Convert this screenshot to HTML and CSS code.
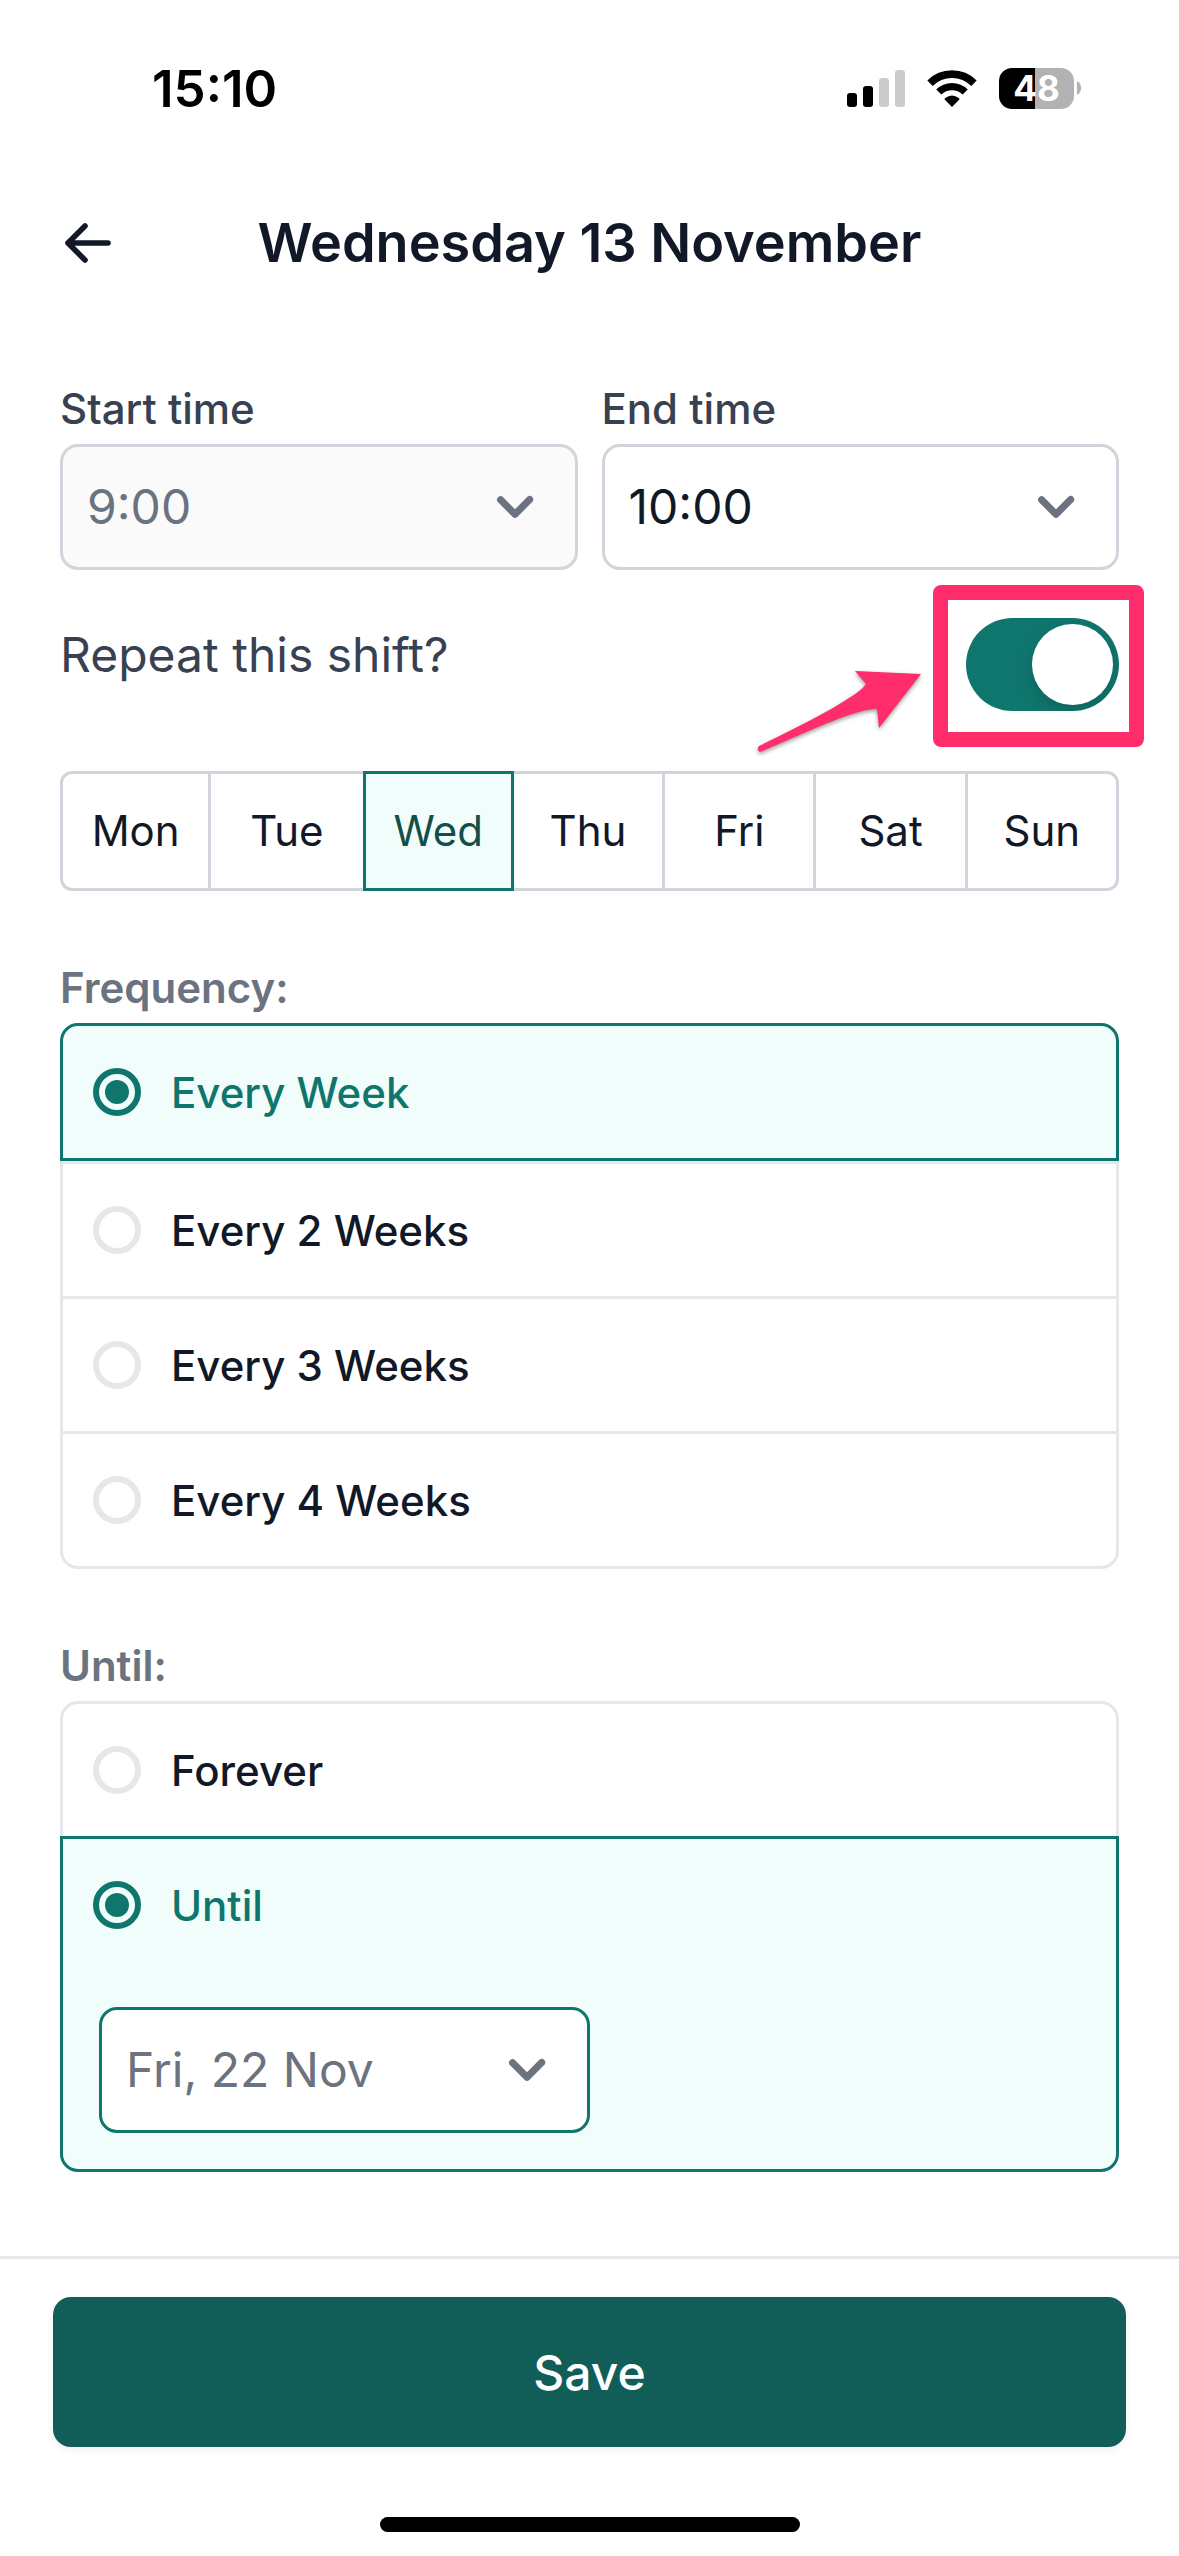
FILE: index.html
```html
<!DOCTYPE html>
<html lang="en">
<head>
  <meta charset="UTF-8">
  <meta name="viewport" content="width=device-width, initial-scale=1.0">
  <title>Wednesday 13 November</title>
  <link rel="stylesheet" href="styles.css">
</head>
<body>
  <!-- Status bar -->
  <div class="status-bar">
    <span class="clock">15:10</span>
    <div class="status-icons">
      <svg width="58" height="37" viewBox="0 0 58 37">
        <rect x="0" y="23" width="10" height="14" rx="3" fill="#000"/>
        <rect x="16" y="16" width="10" height="21" rx="3" fill="#000"/>
        <rect x="32" y="8" width="10" height="29" rx="3" fill="#cbcbcb"/>
        <rect x="48" y="0" width="10" height="37" rx="3" fill="#cbcbcb"/>
      </svg>
      <svg width="50" height="37" viewBox="0 0 50 37">
        <path d="M3 13.2A31.2 31.2 0 0 1 47 13.2" fill="none" stroke="#000" stroke-width="7.6"/>
        <path d="M11.8 22A18.7 18.7 0 0 1 38.2 22" fill="none" stroke="#000" stroke-width="7.2"/>
        <path d="M25 37L17.6 29.4Q17.4 28.6 18.2 28Q25 22.8 31.8 28Q32.6 28.6 32.4 29.4Z" fill="#000"/>
      </svg>
      <div class="battery">
        <span class="battery-level">48</span>
        <svg width="4" height="14" viewBox="0 0 4 14"><path d="M0 0Q4 2 4 7T0 14Z" fill="#b2b2b2"/></svg>
      </div>
    </div>
  </div>

  <header class="header">
    <button type="button" class="back-btn" aria-label="Back">
      <svg width="48" height="42" viewBox="0 0 48 42" fill="none" stroke="#111827" stroke-width="5.6" stroke-linecap="round" stroke-linejoin="round">
        <path d="M21 4L4 21L21 38M4 21H44"/>
      </svg>
    </button>
    <h1>Wednesday 13 November</h1>
  </header>

  <form class="shift-form" id="shiftForm">
    <div class="time-row">
      <div class="field">
        <label class="field-label" for="startTime">Start time</label>
        <div class="select-box">
          <select id="startTime" disabled>
            <option>9:00</option>
          </select>
          <svg class="chevron" viewBox="0 0 20 20"><path d="M5.3 7.3a1 1 0 0 1 1.4 0L10 10.6l3.3-3.3a1 1 0 1 1 1.4 1.4l-4 4a1 1 0 0 1-1.4 0l-4-4a1 1 0 0 1 0-1.4z"/></svg>
        </div>
      </div>
      <div class="field">
        <label class="field-label" for="endTime">End time</label>
        <div class="select-box">
          <select id="endTime">
            <option>10:00</option>
          </select>
          <svg class="chevron" viewBox="0 0 20 20"><path d="M5.3 7.3a1 1 0 0 1 1.4 0L10 10.6l3.3-3.3a1 1 0 1 1 1.4 1.4l-4 4a1 1 0 0 1-1.4 0l-4-4a1 1 0 0 1 0-1.4z"/></svg>
        </div>
      </div>
    </div>

    <!-- Repeat switch with highlight -->
    <div class="repeat-row">
      <label for="repeat">Repeat this shift?</label>
      <div class="switch-container">
        <input type="checkbox" class="switch" id="repeat" checked>
        <div class="highlight"></div>
        <svg class="pointer" width="170" height="90" viewBox="0 0 170 90">
          <path d="M166 8L100 5L111 18C104 29 62 52 4 80Q1 84 5 86C66 60 98 44 122 43L124 62Z" fill="#ff2d6b"/>
        </svg>
      </div>
    </div>

    <div class="days">
      <button type="button">Mon</button>
      <button type="button">Tue</button>
      <button type="button" class="active">Wed</button>
      <button type="button">Thu</button>
      <button type="button">Fri</button>
      <button type="button">Sat</button>
      <button type="button">Sun</button>
    </div>

    <fieldset class="group">
      <legend>Frequency:</legend>
      <div class="option selected">
        <label><input type="radio" name="frequency" checked> Every Week</label>
      </div>
      <div class="option">
        <label><input type="radio" name="frequency"> Every 2 Weeks</label>
      </div>
      <div class="option">
        <label><input type="radio" name="frequency"> Every 3 Weeks</label>
      </div>
      <div class="option">
        <label><input type="radio" name="frequency"> Every 4 Weeks</label>
      </div>
    </fieldset>

    <fieldset class="group">
      <legend>Until:</legend>
      <div class="option">
        <label><input type="radio" name="until"> Forever</label>
      </div>
      <div class="option selected">
        <label><input type="radio" name="until" checked> Until</label>
        <div class="select-box until-date">
          <select aria-label="Until date">
            <option>Fri, 22 Nov</option>
          </select>
          <svg class="chevron" viewBox="0 0 20 20"><path d="M5.3 7.3a1 1 0 0 1 1.4 0L10 10.6l3.3-3.3a1 1 0 1 1 1.4 1.4l-4 4a1 1 0 0 1-1.4 0l-4-4a1 1 0 0 1 0-1.4z"/></svg>
        </div>
      </div>
    </fieldset>
  </form>

  <footer class="footer">
    <button type="submit" class="save-btn" form="shiftForm">Save</button>
    <div class="home-indicator"></div>
  </footer>
</body>
</html>
```

FILE: styles.css
```css
* {
  box-sizing: border-box;
}

body {
  font-family: Inter, 'Liberation Sans', sans-serif;
  background-color: #fff;
  color: #111827;
  display: flex;
  flex-direction: column;
  min-height: 100vh;
  margin: 0;
}

button,
select {
  font-family: inherit;
  cursor: pointer;
}

/* Status bar */
.status-bar {
  display: flex;
  justify-content: space-between;
  align-items: center;
  height: 176px;
  padding: 0 98px 0 152px;
  color: #000;
}

.clock {
  font-size: 51px;
  font-weight: 600;
}

.status-icons {
  display: flex;
  align-items: center;
  gap: 22px;
}

.battery {
  display: flex;
  align-items: center;
  gap: 3px;
}

.battery-level {
  width: 75px;
  height: 41px;
  border-radius: 13px;
  background: linear-gradient(to right, #000 48%, #b2b2b2 48%);
  color: #fff;
  font-size: 35px;
  font-weight: 700;
  line-height: 41px;
  text-align: center;
}

/* Header */
.header {
  display: grid;
  grid-template-columns: 60px 1fr 60px;
  align-items: center;
  height: 134px;
  padding: 0 60px;
}

.header h1 {
  margin: 0;
  font-size: 54px;
  font-weight: 600;
  line-height: 84px;
  text-align: center;
}

.back-btn {
  display: flex;
  padding: 0 4px;
  border: none;
  background: none;
}

/* Form */
.shift-form {
  padding: 69px 60px 84px;
}

.time-row {
  display: grid;
  grid-template-columns: 1fr 1fr;
  gap: 24px;
}

.field-label {
  display: block;
  margin-bottom: 5px;
  color: #374151;
  font-size: 42px;
  font-weight: 500;
  line-height: 60px;
}

.select-box {
  display: grid;
  align-items: center;
}

.select-box select {
  grid-area: 1 / 1;
  appearance: none;
  width: 100%;
  height: 126px;
  padding: 0 24px 2px;
  border: 3px solid #d1d5db;
  border-radius: 18px;
  background-color: #fff;
  color: #111827;
  font-size: 48px;
}

.select-box select:disabled {
  background-color: #fafafa;
  color: #6b7280;
  opacity: 1;
}

.chevron {
  grid-area: 1 / 1;
  justify-self: end;
  width: 72px;
  height: 72px;
  margin-right: 27px;
  fill: #6b7280;
  pointer-events: none;
}

/* Repeat switch */
.repeat-row {
  display: flex;
  justify-content: space-between;
  align-items: flex-start;
  margin: 48px 0 60px;
  color: #374151;
  font-size: 48px;
  line-height: 74px;
}

.switch-container {
  display: flex;
  position: relative;
}

.switch {
  appearance: none;
  display: flex;
  justify-content: flex-end;
  width: 153px;
  height: 93px;
  margin: 0;
  padding: 6px;
  border-radius: 47px;
  background-color: #0f766e;
  overflow: hidden;
}

.switch::before {
  content: "";
  width: 81px;
  height: 81px;
  border-radius: 50%;
  background-color: #fff;
  box-shadow: 0 6px 16px rgba(0, 0, 0, 0.15);
}

.switch:not(:checked) {
  justify-content: flex-start;
  background-color: #e5e7eb;
}

.highlight {
  position: absolute;
  inset: -33px -25px -36px -33px;
  border: 15px solid #ff2d6b;
  border-radius: 8px;
  pointer-events: none;
}

.pointer {
  position: absolute;
  top: 48px;
  right: 194px;
  filter: drop-shadow(0 2px 2px rgba(0, 0, 0, 0.4));
}

/* Week days */
.days {
  display: grid;
  grid-template-columns: repeat(7, 1fr);
  margin-bottom: 67px;
}

.days button {
  height: 120px;
  padding: 0 0 2px;
  border: solid #d1d5db;
  border-width: 3px 3px 3px 0;
  background-color: #fff;
  color: #111827;
  font-size: 42px;
}

.days button:first-child {
  border-left-width: 3px;
  border-radius: 12px 0 0 12px;
}

.days button:last-child {
  border-radius: 0 12px 12px 0;
}

.days button:has(+ .active) {
  border-right-width: 0;
}

.days .active {
  border: 3px solid #0f766e;
  background-color: #f0fdfa;
  color: #134e4a;
}

/* Radio groups */
.group {
  min-width: 0;
  margin: 0;
  padding: 0;
  border: none;
}

.group + .group {
  margin-top: 67px;
}

.group legend {
  margin-bottom: 5px;
  padding: 0;
  color: #6b7280;
  font-size: 42px;
  font-weight: 600;
  line-height: 60px;
}

.option {
  border: 3px solid #e5e7eb;
}

.option + .option {
  margin-top: -3px;
}

.option.selected + .option {
  margin-top: 0;
}

.option:nth-of-type(1) {
  border-radius: 18px 18px 0 0;
}

.option:last-child {
  border-radius: 0 0 18px 18px;
}

.option label {
  display: flex;
  align-items: center;
  gap: 30px;
  height: 132px;
  padding: 0 30px;
  font-size: 42px;
  font-weight: 500;
}

.option input {
  appearance: none;
  width: 48px;
  height: 48px;
  margin: 0;
  border: 6px solid #e5e7eb;
  border-radius: 50%;
}

.option input:checked {
  padding: 6px;
  border-color: #0f766e;
  background: #0f766e content-box;
}

.option.selected {
  position: relative;
  border-color: #0f766e;
  background-color: #f0fdfa;
}

.option.selected label {
  color: #0f766e;
}

.until-date {
  width: 491px;
  margin: 36px;
}

.until-date select {
  border-color: #0f766e;
  color: #6b7280;
}

/* Footer */
.footer {
  display: flex;
  flex-direction: column;
  align-items: center;
  margin-top: auto;
  padding: 38px 53px 24px;
  border-top: 3px solid #e5e7eb;
}

.save-btn {
  width: 100%;
  height: 150px;
  margin-bottom: 70px;
  border: none;
  border-radius: 18px;
  background-color: #115e59;
  box-shadow: 0 3px 9px rgba(0, 0, 0, 0.06);
  color: #fff;
  font-size: 48px;
  font-weight: 500;
}

.home-indicator {
  width: 420px;
  height: 15px;
  border-radius: 8px;
  background-color: #000;
}
```
